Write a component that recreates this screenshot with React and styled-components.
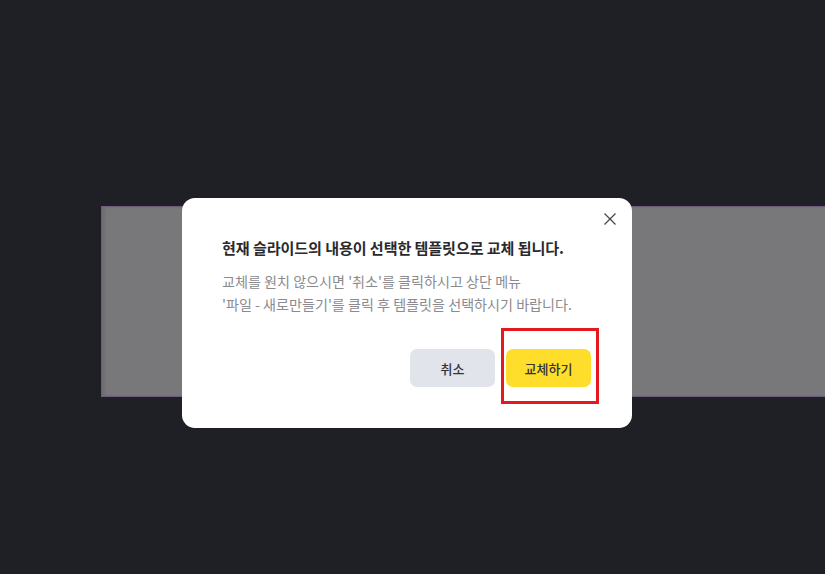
import React from "react";
import styled, { createGlobalStyle } from "styled-components";

const Global = createGlobalStyle`
  html, body { margin: 0; padding: 0; background: #1f2025; }
  body { font-family: "Noto Sans CJK KR", "Noto Sans", sans-serif; }
  * { box-sizing: border-box; }
`;

const Page = styled.div`
  width: 825px;
  height: 574px;
  background: #1f2025;
  overflow: hidden;
  padding: 206px 0 0 101px;
  position: relative;
`;

const Slide = styled.div`
  width: 760px;
  height: 191px;
  background: #78787a;
  border: 1px solid #6f5c7a;
  box-shadow: inset 3px 0 3px rgba(0, 0, 0, 0.08);
`;

const Overlay = styled.div`
  position: absolute;
  inset: 0;
  padding: 198px 0 0 182px;
`;

const Modal = styled.div`
  position: relative;
  width: 450px;
  height: 230px;
  background: #ffffff;
  border-radius: 13px;
  padding: 38px 41px 41px 40px;
  display: flex;
  flex-direction: column;
`;

const CloseButton = styled.button`
  position: absolute;
  top: 14px;
  right: 15px;
  width: 14px;
  height: 14px;
  padding: 0;
  border: 0;
  background: transparent;
  display: flex;
  cursor: pointer;
`;

const Title = styled.h2`
  margin: 0;
  font-size: 15.1px;
  font-weight: 600;
  line-height: 22px;
  color: #2a2a2e;
  letter-spacing: -0.1px;
`;

const Body = styled.p`
  margin: 12px 0 0;
  font-size: 14.1px;
  font-weight: 400;
  line-height: 23px;
  color: #8b8b8f;
`;

const Actions = styled.div`
  margin-top: auto;
  display: flex;
  justify-content: flex-end;
  gap: 11px;
`;

const Button = styled.button`
  width: 85px;
  height: 38px;
  border: 0;
  border-radius: 7px;
  font-family: inherit;
  font-size: 13px;
  font-weight: 500;
  color: #333338;
  background: ${(p) => (p.$primary ? "#fedd2b" : "#e1e4eb")};
  cursor: pointer;
`;

const Highlight = styled.div`
  position: relative;
  display: flex;
`;

const Annotation = styled.div`
  position: absolute;
  top: -21px;
  left: -5px;
  width: 98px;
  height: 76px;
  border: 3px solid #e4191f;
  pointer-events: none;
`;

export default function App() {
  return (
    <>
      <Global />
      <Page>
        <Slide />
        <Overlay>
          <Modal>
            <CloseButton aria-label="닫기">
              <svg width="14" height="14" viewBox="0 0 14 14">
                <path d="M1.5 1.5 L12.5 12.5 M12.5 1.5 L1.5 12.5" stroke="#444" strokeWidth="1.2" fill="none" />
              </svg>
            </CloseButton>
            <Title>현재 슬라이드의 내용이 선택한 템플릿으로 교체 됩니다.</Title>
            <Body>
              교체를 원치 않으시면 '취소'를 클릭하시고 상단 메뉴
              <br />
              '파일 - 새로만들기'를 클릭 후 템플릿을 선택하시기 바랍니다.
            </Body>
            <Actions>
              <Button>취소</Button>
              <Highlight>
                <Button $primary>교체하기</Button>
                <Annotation />
              </Highlight>
            </Actions>
          </Modal>
        </Overlay>
      </Page>
    </>
  );
}
